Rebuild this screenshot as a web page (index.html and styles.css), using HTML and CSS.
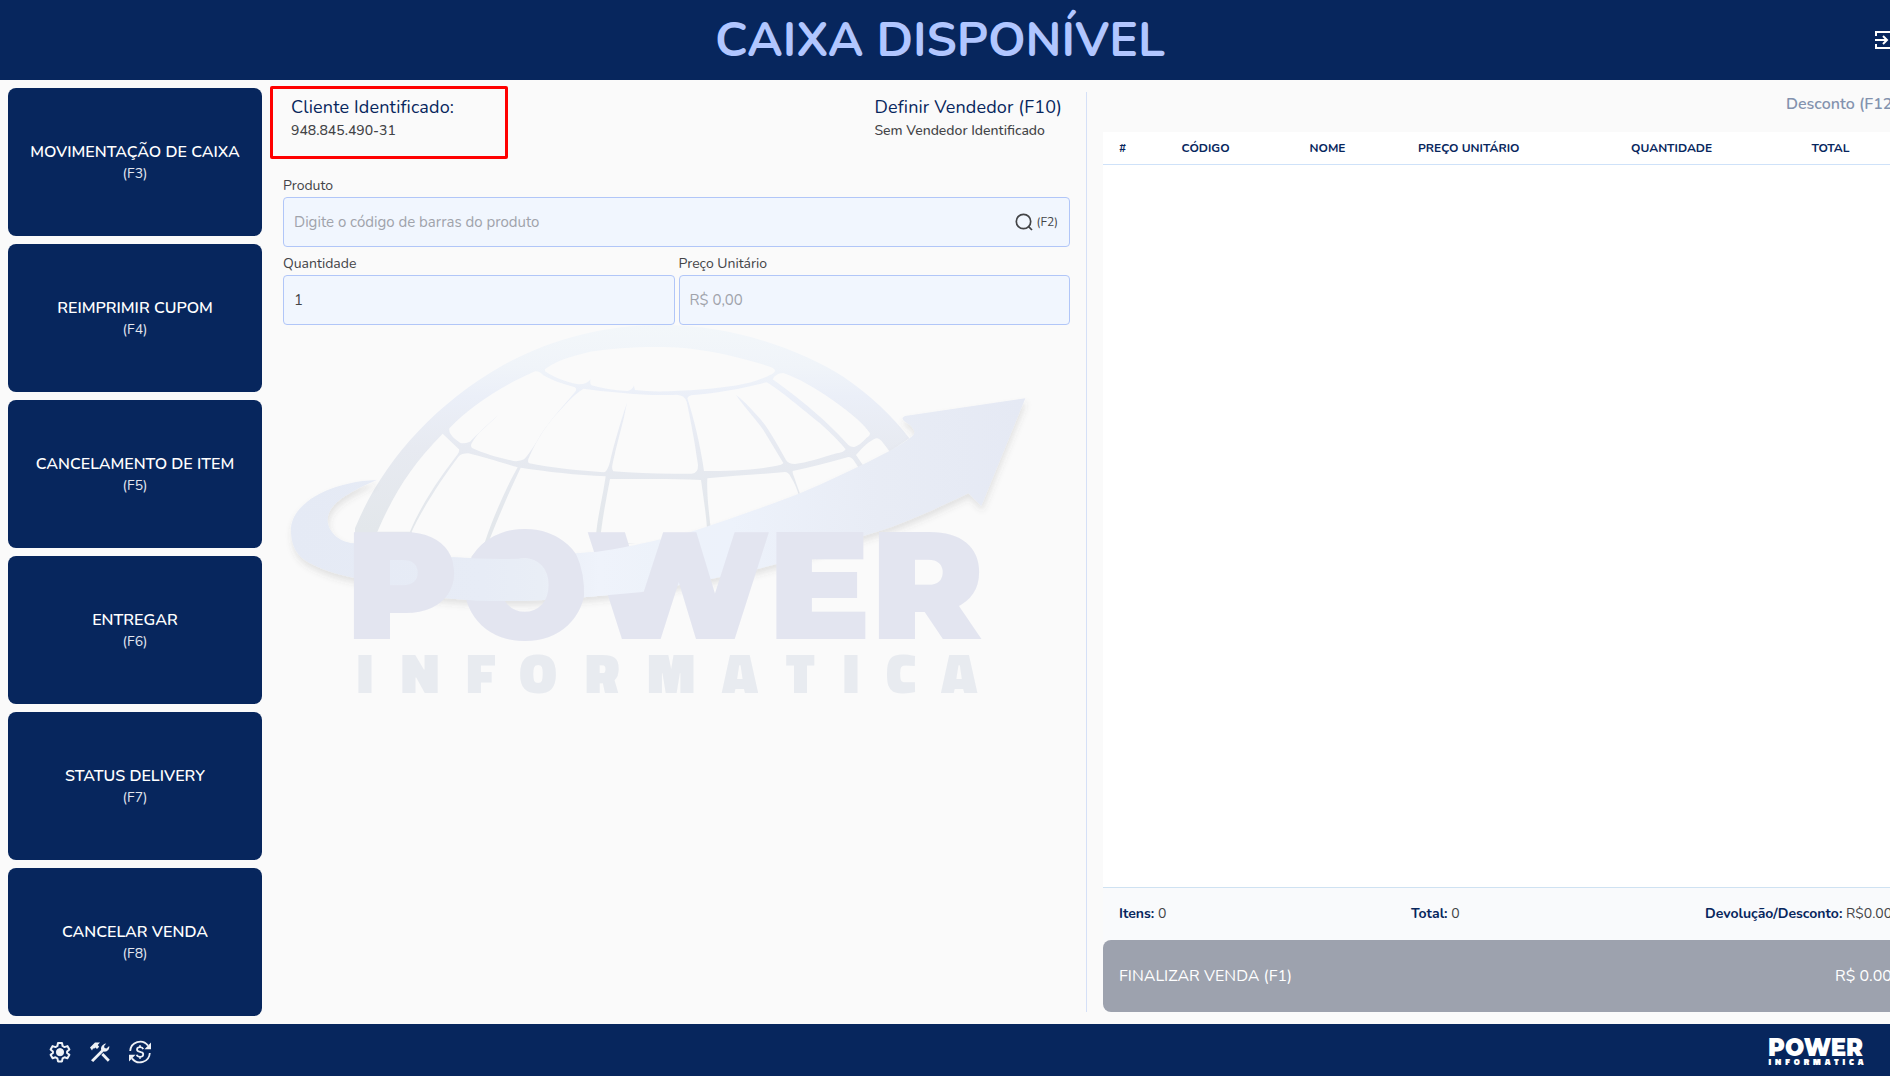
FILE: index.html
```html
<!DOCTYPE html>
<html lang="pt-BR">
<head>
<meta charset="utf-8">
<title>Caixa Disponível</title>
<link rel="stylesheet" href="styles.css">
</head>
<body>
<header class="topbar">
  <h1 class="topbar-title">CAIXA DISPONÍVEL</h1>
  <svg class="exit-icon" viewBox="0 0 24 24" fill="none" stroke="#fff" stroke-width="2"><path d="M4 8V4H21V20H4V16M3 12H14.500M11 8l4 4-4 4"/></svg>
</header>
<main class="workspace">
  <nav class="actions">
    <button class="action"><span class="action-name">MOVIMENTAÇÃO DE CAIXA</span><span class="action-key">(F3)</span></button>
    <button class="action"><span class="action-name">REIMPRIMIR CUPOM</span><span class="action-key">(F4)</span></button>
    <button class="action"><span class="action-name">CANCELAMENTO DE ITEM</span><span class="action-key">(F5)</span></button>
    <button class="action"><span class="action-name">ENTREGAR</span><span class="action-key">(F6)</span></button>
    <button class="action"><span class="action-name">STATUS DELIVERY</span><span class="action-key">(F7)</span></button>
    <button class="action"><span class="action-name">CANCELAR VENDA</span><span class="action-key">(F8)</span></button>
  </nav>
  <section class="sale">
    <div class="people">
      <div class="client"><div class="person-title">Cliente Identificado:</div><div class="person-sub">948.845.490-31</div></div>
      <div class="seller"><div class="person-title">Definir Vendedor (F10)</div><div class="person-sub">Sem Vendedor Identificado</div></div>
    </div>
    <div class="field">
      <div class="label">Produto</div>
      <div class="input"><span class="placeholder">Digite o código de barras do produto</span>
        <span class="search"><svg width="20" height="20" viewBox="0 0 20 20" fill="none" stroke="#434447" stroke-width="1.700"><circle cx="9.500" cy="9.500" r="7.200"/><path d="M14.600 14.600L18 18"/></svg><span class="search-key">(F2)</span></span>
      </div>
    </div>
    <div class="field-row">
      <div class="field"><div class="label">Quantidade</div><div class="input">1</div></div>
      <div class="field"><div class="label">Preço Unitário</div><div class="input"><span class="placeholder">R$ 0,00</span></div></div>
    </div>
    <svg class="watermark" viewBox="39 45 2361 1125">
      <defs>
        <linearGradient id="dome" gradientUnits="userSpaceOnUse" x1="0" y1="45" x2="0" y2="660">
          <stop offset="0" stop-color="#f3f7fa"/><stop offset=".2" stop-color="#f0f4f9"/><stop offset=".35" stop-color="#ebeff8"/><stop offset=".6" stop-color="#e7eaf1"/><stop offset="1" stop-color="#e3e7eb"/>
        </linearGradient>
        <linearGradient id="ribbon" gradientUnits="userSpaceOnUse" x1="63" y1="0" x2="2266" y2="0">
          <stop offset="0" stop-color="#e5eaf5"/><stop offset=".26" stop-color="#e7ecf6"/><stop offset=".34" stop-color="#e9eef6"/><stop offset=".42" stop-color="#eff3fb"/><stop offset=".5" stop-color="#edf2fa"/><stop offset=".6" stop-color="#edf2fb"/><stop offset=".8" stop-color="#e8ecf5"/><stop offset="1" stop-color="#e5e9f4"/>
        </linearGradient>
        <filter id="shade" x="-5%" y="-5%" width="110%" height="115%"><feDropShadow dx="3" dy="14" stdDeviation="9" flood-color="#555" flood-opacity=".14"/></filter>
      </defs>
      <path fill="url(#dome)" d="M255 655C330 470 480 290 700 165C850 85 1000 45 1180 45C1400 45 1600 125 1720 200C1800 255 1870 320 1918 385L1780 480L1320 650L1200 690L640 740L460 740L430 675L255 670Z"/>
      <g fill="#fafafa">
        <path d="M825 178C850 155 900 140 960 125C1020 115 1100 110 1180 111C1300 112 1420 145 1500 170Q1530 182 1500 195C1440 225 1380 230 1300 238C1200 246 1140 246 1095 240Q1092 232 1092 226Q1088 240 1072 243Q1010 240 965 226Q958 220 962 208Q950 224 925 223C880 215 850 200 825 184Z"/>
        <path d="M538 355C600 290 690 230 795 184Q808 182 820 196C850 213 880 222 915 232Q922 238 915 246C870 300 830 340 800 395Q775 435 762 448Q750 455 730 453C690 445 640 430 608 415Q600 410 605 400C620 370 655 345 685 315C650 345 620 375 600 395Q580 403 570 398C550 385 535 370 538 355Z"/>
        <path d="M940 236Q1000 245 1060 249C1120 256 1180 256 1220 254Q1245 256 1250 275C1262 330 1275 400 1284 465Q1285 490 1265 491C1180 493 1100 490 1030 484Q1024 478 1028 460C1040 400 1060 340 1071 278C1050 340 1030 410 1020 455Q1012 487 1000 487C930 482 850 475 778 460Q770 455 778 440C800 390 830 340 880 290Q910 255 940 236Z"/>
        <path d="M1252 265Q1255 256 1270 255C1340 250 1420 235 1490 217C1530 240 1600 300 1650 340Q1700 385 1727 418Q1720 428 1700 430C1650 445 1610 458 1575 462Q1555 462 1548 450C1520 400 1490 345 1460 315Q1420 270 1398 255C1430 300 1460 330 1480 360C1505 400 1525 435 1540 459Q1535 465 1520 467C1460 480 1380 483 1302 483C1290 400 1270 320 1252 265Z"/>
        <path d="M1508 208Q1515 190 1540 189C1620 215 1770 320 1800 370Q1800 378 1790 383Q1770 405 1755 410Q1745 413 1735 405C1660 320 1560 245 1508 208Z"/>
        <path d="M518 371L567 418Q569 425 563 433C520 490 460 570 420 665L322 665C370 555 420 470 518 371Z"/>
        <path d="M595 430C640 440 700 460 743 472C710 530 670 620 645 695L600 745H450L425 665C460 590 520 500 565 440Q575 430 595 430Z"/>
        <path d="M752 473C830 485 920 495 1007 499C1000 550 985 610 979 665V735H640L658 690C690 610 720 540 752 473Z"/>
        <path d="M1020 507C1100 508 1200 505 1293 510C1300 560 1308 610 1311 655L1200 700H993V665C1000 610 1010 560 1020 507Z"/>
        <path d="M1312 505C1390 497 1470 493 1545 486Q1555 486 1562 500C1575 520 1582 540 1588 560L1322 655C1316 600 1310 550 1312 505Z"/>
        <path d="M1568 483Q1640 468 1735 441Q1745 441 1752 452L1767 475L1593 560L1568 489Z"/>
        <path d="M1758 435C1780 410 1800 392 1818 385Q1828 383 1840 400L1858 423V435L1785 475Z"/>
      </g>
      <path fill="url(#ribbon)" filter="url(#shade)" d="M320 510C180 515 63 580 63 660C63 720 90 745 125 762C170 785 210 795 252 803C350 830 440 858 530 865C630 874 730 874 820 870C860 868 900 866 940 862L1118 846L1320 808L1460 778L1520 762L1780 678C1900 645 2000 595 2095 550L2134 588L2266 265L1905 318Q1890 325 1905 335Q1938 355 1932 372Q1925 385 1860 422C1770 470 1680 510 1590 550C1500 585 1400 620 1280 660C1150 700 1040 722 920 730C800 752 660 747 547 742C420 730 330 715 252 700C200 695 173 660 173 630C173 580 240 545 320 510Z"/>
      <text class="mark-power" x="226 570 949 1493 1801" y="987">POWER</text>
      <path fill="url(#ribbon)" d="M547 742C620 746 700 750 770 745Q828 755 833 820Q834 850 822 871Q720 875 620 872L528 864Q558 820 553 785Z"/>
      <path fill="url(#ribbon)" d="M918 731C980 728 1060 715 1171 688L1118 846L942 862Q945 790 918 731Z"/>
      <text class="mark-info" x="260 392 589 748 945 1132 1356 1547 1718 1848 2014" y="1149">INFORMATICA</text>
    </svg>
  </section>
  <section class="cart">
    <div class="discount">Desconto (F12)</div>
    <div class="cart-head"><span>#</span><span>CÓDIGO</span><span>NOME</span><span>PREÇO UNITÁRIO</span><span>QUANTIDADE</span><span>TOTAL</span></div>
    <div class="cart-items"></div>
    <div class="summary"><span><b>Itens:</b> 0</span><span><b>Total:</b> 0</span><span><b>Devolução/Desconto:</b> R$0.00</span></div>
    <button class="finish"><span class="finish-name">FINALIZAR VENDA (F1)</span><span class="finish-total">R$ 0.00</span></button>
  </section>
</main>
<footer class="bottombar">
  <div class="tools">
    <svg viewBox="0 0 24 24" fill="none" stroke="#eef1f6" stroke-width="2"><path stroke-linejoin="round" d="M10 3h4l.6 3 1.900 1.100 2.900-1 2 3.500L19.100 11.600v1.300l2.300 1.900-2 3.500-2.900-1L14.600 18.400 14 21.400h-4l-.6-3L7.500 17.300l-2.900 1-2-3.500 2.300-1.900v-1.300L2.600 9.600l2-3.500 2.900 1L9.400 6z"/><circle cx="12" cy="12.200" r="3.600" fill="#eef1f6" stroke-width="1"/></svg>
    <svg viewBox="0 0 24 24" fill="#eef1f6"><path d="M2 7.500L7 2.600h5L9.700 5.100l1.500 1.600L9 9 7.500 7.500 6.400 8.600H5L4 10.500z"/><path d="M3 20.200L13.200 10c-.7-2.600.8-6 5-6.600L16.100 6l.4 2 2 .4 2.700-2.300c.7 3.200-2.100 6.300-5.600 5.500L5.200 22z"/><path d="M13.300 14.900l2-2 6.500 6.900-2 2z"/></svg>
    <svg viewBox="0 0 24 24" fill="none" stroke="#eef1f6" stroke-width="1.800"><path d="M2.200 11A9.900 9.900 0 0 1 20 5.600M21.800 13A9.900 9.900 0 0 1 4 18.400"/><path fill="#eef1f6" stroke="none" d="M23 2.500V9.200h-6.500zM1 21.500V14.800h6.500z"/><path d="M15.200 9.100C14.800 7.900 13.600 7.200 12.100 7.200 8.300 7.200 8 11 11.300 11.700L13 12.200c3.300.8 2.800 4.600-.9 4.600-1.700 0-2.900-.8-3.400-2.100M12 5.200v2M12 16.800v2"/></svg>
  </div>
  <svg class="brand" viewBox="0 0 96 28"><text class="brand-power" x="0" y="17.500" textLength="95" lengthAdjust="spacingAndGlyphs">POWER</text><text class="brand-info" x="0.500" y="27" textLength="95">INFORMATICA</text></svg>
</footer>
<div class="highlight"></div>
</body>
</html>
```
FILE: styles.css
```css
* { box-sizing: border-box; }
body {
  margin: 0;
  height: 1076px;
  width: 1890px;
  overflow: hidden;
  display: flex;
  flex-direction: column;
  background: #fafafa;
  color: #434447;
  font-family: "Nunito", "Lato", "Liberation Sans", sans-serif;
  font-size: 14px;
}
button { border: 0; font: inherit; }

.topbar {
  height: 80px;
  flex: none;
  display: flex;
  align-items: center;
  background: #07265d;
  padding-left: 715px;
}
.topbar-title {
  margin: 0;
  width: 1157px;
  flex: none;
  color: #b1c6ff;
  font-size: 48px;
  font-weight: 700;
  line-height: 80px;
  white-space: nowrap;
}
.exit-icon { width: 24px; height: 24px; flex: none; }

.workspace { flex: 1; display: flex; min-height: 0; }

.actions {
  width: 254px;
  flex: none;
  margin: 8px 0 8px 8px;
  display: flex;
  flex-direction: column;
  gap: 8px;
}
.action {
  flex: 1;
  display: flex;
  flex-direction: column;
  align-items: center;
  justify-content: center;
  padding: 0 0 1px;
  border-radius: 8px;
  background: #07265d;
  color: #fff;
  white-space: nowrap;
}
.action-name { font-size: 16px; font-weight: 600; line-height: 24px; }
.action-key { font-size: 14px; line-height: 20px; color: #e3e7ef; }

.sale {
  width: 825px;
  flex: none;
  margin: 12px 0;
  padding: 0 16px 0 21px;
  border-right: 1px solid #d5e0f7;
}
.people {
  display: flex;
  justify-content: space-between;
  height: 83px;
  padding: 3px 8px 0;
}
.person-title { color: #07265d; font-size: 18px; line-height: 24px; letter-spacing: 0.15px; }
.person-sub { line-height: 24px; font-weight: 500; }
.field { flex: 1; }
.field-row { display: flex; gap: 4px; margin-top: 6px; }
.label { height: 22px; line-height: 22px; }
.input {
  height: 50px;
  display: flex;
  align-items: center;
  justify-content: space-between;
  padding: 0 11px 0 10px;
  background: #f1f6fe;
  border: 1px solid #b1c6f8;
  border-radius: 4px;
  font-size: 15px;
}
.placeholder { color: #a0a3ab; }
.search { display: flex; align-items: center; gap: 3px; font-size: 12px; }
.watermark { display: block; width: 787px; height: 375px; }
.mark-power { font-family: "Montserrat", "Inter", sans-serif; font-weight: 900; font-size: 458px; fill: #e3e5f0; }
.mark-info { font-family: "Titillium Web", "Exo 2", "Open Sans", sans-serif; font-weight: 900; font-size: 168px; fill: #e8ebf0; }

.cart {
  width: 801px;
  flex: none;
  margin: 12px 0 12px 16px;
  display: flex;
  flex-direction: column;
  white-space: nowrap;
}
.discount {
  height: 40px;
  padding-left: 683px;
  color: #8392ae;
  font-size: 16px;
  font-weight: 600;
  line-height: 24px;
}
.cart-head {
  height: 33px;
  display: grid;
  grid-template-columns: 62.5px 128px 108.5px 213px 180.500px auto;
  align-items: center;
  padding-left: 16px;
  background: #fff;
  border-bottom: 1px solid #cfe2f9;
  color: #07265d;
  font-size: 12px;
  font-weight: 700;
}
.cart-items { flex: 1; background: #fff; border-bottom: 1px solid #cfe2f2; }
.summary {
  height: 52px;
  display: grid;
  grid-template-columns: 292px 294px auto;
  align-items: center;
  padding: 0 0 2px 16px;
  background: #f9fafc;
}
.summary b { color: #07265d; font-weight: 700; }
.finish {
  height: 72px;
  display: flex;
  align-items: center;
  padding: 0 0 0 16px;
  border-radius: 8px;
  background: #9da2ae;
  color: #fff;
  font-size: 16px;
}
.finish-name { width: 716px; flex: none; text-align: left; }

.bottombar {
  height: 52px;
  flex: none;
  display: flex;
  align-items: center;
  justify-content: space-between;
  padding: 3px 26px 0 48px;
  background: #07265d;
}
.tools { display: flex; gap: 16px; }
.tools svg { width: 24px; height: 24px; }
.brand { width: 96px; height: 28px; overflow: visible; }
.brand-power { font-family: "Montserrat", "Inter", sans-serif; font-weight: 900; font-size: 24px; fill: #fff; }
.brand-info { font-family: "Titillium Web", "Exo 2", "Open Sans", sans-serif; font-weight: 900; font-size: 9px; fill: #fff; }

/* Callout drawn over the client block */
.highlight {
  position: absolute;
  left: 270px;
  top: 86px;
  width: 238px;
  height: 73px;
  border: 3px solid #f00;
  border-radius: 2px;
}
```
